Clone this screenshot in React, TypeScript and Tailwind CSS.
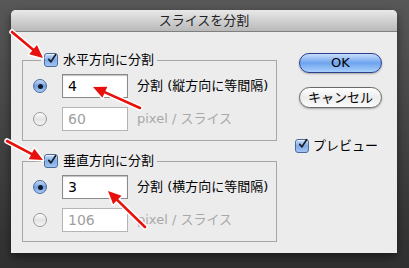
const font = "font-['DejaVu_Sans','Noto_Sans_CJK_JP',sans-serif]";

function AquaCheck() {
  return (
    <span className="flex h-[14px] w-[14px] shrink-0 items-center justify-center rounded-[3px] border border-[#4a6a9a] bg-gradient-to-b from-[#c8dcf6] via-[#7fabe6] to-[#9fc4f2] shadow-[inset_0_1px_1px_rgba(255,255,255,0.7)]">
      <svg width="14" height="14" viewBox="0 0 14 14" className="-mt-[3px] ml-[2px]">
        <path d="M2.5 7.5 L5.5 11 L12 1" fill="none" stroke="#1a1f2e" strokeWidth="2.4" strokeLinecap="round" strokeLinejoin="round" />
      </svg>
    </span>
  );
}

function Radio({ on }: { on: boolean }) {
  return on ? (
    <span className="flex h-[14px] w-[14px] shrink-0 items-center justify-center rounded-full border border-[#4a6a9a] bg-gradient-to-b from-[#c8dcf6] via-[#6f9fe0] to-[#a9ccf4]">
      <span className="h-[5px] w-[5px] rounded-full bg-[#111827]" />
    </span>
  ) : (
    <span className="h-[14px] w-[14px] shrink-0 rounded-full border border-[#9a9a9a] bg-gradient-to-b from-[#ffffff] via-[#e2e2e2] to-[#f6f6f6]" />
  );
}

function Field({ value, disabled }: { value: string; disabled?: boolean }) {
  return (
    <div
      className={
        disabled
          ? "flex h-[24px] w-[66px] items-center border border-[#b4b4b4] bg-white pl-[5px] text-[14px] text-[#a0a0a0]"
          : "flex h-[24px] w-[66px] items-center border border-[#8a8a8a] bg-white pl-[5px] text-[14px] text-black shadow-[inset_0_1px_1px_rgba(0,0,0,0.25)]"
      }
    >
      {value}
    </div>
  );
}

function Group({ title, count, size, dir }: { title: string; count: string; size: string; dir: string }) {
  return (
    <fieldset className="w-[255px] border border-[#a6a6a6] pb-[9px]">
      <legend className="ml-[18px] flex h-[16px] items-center gap-[5px] px-[3px] text-[13px] text-black">
        <AquaCheck />
        <span>{title}</span>
      </legend>
      <div className="flex flex-col gap-[9px] pl-[10px] pt-[6px]">
        <div className="flex items-center">
          <Radio on />
          <div className="ml-[15px]">
            <Field value={count} />
          </div>
          <span className="ml-[9px] text-[13px] text-black">分割 ({dir}に等間隔)</span>
        </div>
        <div className="flex items-center">
          <Radio on={false} />
          <div className="ml-[15px]">
            <Field value={size} disabled />
          </div>
          <span className="ml-[9px] text-[13px] text-[#a8a8a8]">pixel / スライス</span>
        </div>
      </div>
    </fieldset>
  );
}

function Arrow({ x1, y1, x2, y2 }: { x1: number; y1: number; x2: number; y2: number }) {
  const dx = x2 - x1;
  const dy = y2 - y1;
  const len = Math.hypot(dx, dy);
  const ux = dx / len;
  const uy = dy / len;
  const hl = 13;
  const hw = 6;
  const bx = x2 - ux * hl;
  const by = y2 - uy * hl;
  const head = `${x2},${y2} ${bx - uy * hw},${by + ux * hw} ${bx + uy * hw},${by - ux * hw}`;
  return (
    <g>
      <line x1={x1} y1={y1} x2={bx} y2={by} stroke="white" strokeWidth="5.5" strokeLinecap="round" />
      <polygon points={head} fill="white" stroke="white" strokeWidth="3" strokeLinejoin="round" />
      <line x1={x1} y1={y1} x2={bx + ux} y2={by + uy} stroke="#e8100c" strokeWidth="2.6" strokeLinecap="round" />
      <polygon points={head} fill="#e8100c" />
    </g>
  );
}

export default function App() {
  return (
    <div className={`relative h-[268px] w-[409px] overflow-hidden bg-gradient-to-b from-[#585858] to-[#303030] pl-[11px] pt-[10px] ${font}`}>
      <div className="flex h-[243px] w-[386px] flex-col overflow-hidden rounded-t-[5px] bg-[#ececec] shadow-[0_4px_10px_rgba(0,0,0,0.5)]">
        <div className="flex h-[22px] shrink-0 items-center justify-center border-b border-[#7f7f7f] bg-gradient-to-b from-[#e9e9e9] to-[#b9b9b9] text-[13px] text-[#222]">
          スライスを分割
        </div>
        <div className="flex px-[11px] pt-[20px]">
          <div className="flex flex-col gap-[12px]">
            <Group title="水平方向に分割" count="4" size="60" dir="縦方向" />
            <Group title="垂直方向に分割" count="3" size="106" dir="横方向" />
          </div>
          <div className="ml-[22px] flex flex-col pt-[1px]">
            <button className="flex h-[20px] w-[83px] items-center justify-center rounded-full border border-[#2b3f8f] bg-gradient-to-b from-[#c9defa] via-[#6fa3ee] to-[#a8d0fb] text-[13px] text-black shadow-[0_1px_2px_rgba(0,0,0,0.3)]">
              OK
            </button>
            <button className="mt-[14px] flex h-[21px] w-[83px] items-center justify-center rounded-full border border-[#6a6a6a] bg-gradient-to-b from-[#ffffff] via-[#ececec] to-[#fbfbfb] text-[13px] text-black shadow-[0_1px_2px_rgba(0,0,0,0.3)]">
              キャンセル
            </button>
            <div className="-ml-[4px] mt-[28px] flex items-center gap-[4px] text-[13px] text-black">
              <AquaCheck />
              <span>プレビュー</span>
            </div>
          </div>
        </div>
      </div>
      <svg className="pointer-events-none absolute inset-0" width="409" height="268">
        <Arrow x1={12} y1={32} x2={43} y2={58} />
        <Arrow x1={140} y1={108} x2={93} y2={87} />
        <Arrow x1={7} y1={141} x2={43} y2={160} />
        <Arrow x1={145} y1={227} x2={108} y2={191} />
      </svg>
    </div>
  );
}
